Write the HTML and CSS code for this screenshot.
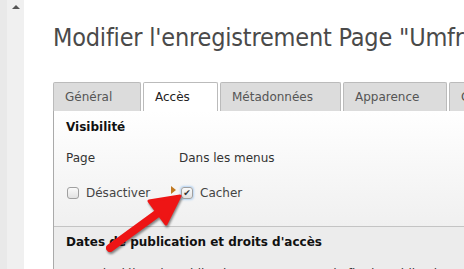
FILE: index.html
```html
<!DOCTYPE html>
<html>
<head>
    <title>Modifier l'enregistrement</title>
    <link rel="stylesheet" href="styles.css">
</head>
<body>
    <div class="scroll-rail">
        <div class="scroll-up"></div>
    </div>

    <div class="content">
        <h1 class="page-title">Modifier l'enregistrement Page "Umfrage"</h1>

        <div class="tabs">
            <div class="tab">Général</div>
            <div class="tab active">Accès</div>
            <div class="tab">Métadonnées</div>
            <div class="tab">Apparence</div>
            <div class="tab">Comportement</div>
        </div>

        <div class="panel">
            <div class="section visibility">
                <h3>Visibilité</h3>
                <div class="field-row labels">
                    <span class="col-a">Page</span>
                    <span class="col-b">Dans les menus</span>
                </div>
                <div class="field-row checks">
                    <span class="col-a check"><span class="box"></span>Désactiver</span>
                    <span class="col-b check">
                        <span class="marker"></span>
                        <span class="box checked focused">&#10004;</span>Cacher
                    </span>
                </div>
            </div>

            <div class="section dates">
                <h3>Dates de publication et droits d'accès</h3>
                <div class="field-row">
                    <span class="col-wide">Date de début de publication</span>
                    <span>Date de fin de publication</span>
                </div>
            </div>

            <!-- annotation arrow -->
            <svg class="callout" width="84" height="64" viewBox="0 0 84 64">
                <path d="M6 58 L54 23" stroke="#ee1515" stroke-width="8" stroke-linecap="round" fill="none"/>
                <path d="M76 6 L45 11 L62 34 Z" fill="#ee1515" stroke="#ee1515" stroke-width="3" stroke-linejoin="round"/>
            </svg>
        </div>
    </div>
</body>
</html>
```

FILE: styles.css
```css
body {
    margin: 0;
    display: flex;
    background: #fff;
    font-family: "DejaVu Sans", Verdana, sans-serif;
    font-size: 12px;
    color: #333;
    height: 269px;
    overflow: hidden;
}
.scroll-rail {
    width: 17px;
    border-left: 7px solid #e9e9e9;
    background: #f0f0f0;
    flex-shrink: 0;
    display: flex;
    justify-content: center;
}
.scroll-up {
    margin-top: 5px;
    width: 0;
    height: 0;
    border-left: 4px solid transparent;
    border-right: 4px solid transparent;
    border-bottom: 4px solid #555;
}
.content {
    flex: 1;
    padding-left: 29px;
    white-space: nowrap;
    overflow: hidden;
}
.page-title {
    margin: 23px 0 0;
    font-family: "DejaVu Sans", sans-serif;
    font-stretch: condensed;
    font-weight: normal;
    font-size: 25px;
    line-height: 30px;
    letter-spacing: -0.2px;
    color: #4a4a4a;
}
.tabs {
    display: flex;
    gap: 2px;
    margin-top: 29px;
    height: 29px;
}
.tab {
    flex-shrink: 0;
    border: 1px solid #bbb;
    border-bottom: none;
    border-radius: 2px 2px 0 0;
    background: #dcdcdc;
    color: #555;
    padding: 0 11px;
    line-height: 28px;
    font-size: 12px;
}
.tab:nth-child(1) { width: 64px; }
.tab:nth-child(2) { width: 51px; background: #fff; color: #222; }
.tab:nth-child(3) { width: 97px; }
.tab:nth-child(4) { width: 80px; }
.panel {
    position: relative;
    border-left: 1px solid #aaa;
    height: 200px;
}
.section h3 {
    margin: 0;
    font-size: 12px;
    font-weight: bold;
    color: #111;
}
.visibility {
    padding: 9px 12px 0;
    height: 106px;
    background: linear-gradient(#fff, #f0f0f0);
    border-bottom: 1px solid #c4c4c4;
}
.field-row {
    display: flex;
    align-items: center;
}
.labels {
    margin-top: 17px;
}
.checks {
    margin-top: 21px;
    color: #444;
}
.col-a {
    width: 113px;
}
.check {
    display: flex;
    align-items: center;
}
.box {
    box-sizing: border-box;
    width: 12px;
    height: 12px;
    margin: 0 7px 0 1px;
    border: 1px solid #a0a0a0;
    border-radius: 3px;
    background: linear-gradient(#fafafa, #e2e2e2);
    font-size: 9px;
    line-height: 10px;
    text-align: center;
    color: #333;
}
.box.focused {
    box-shadow: 0 0 2px 1px #b5d3f3;
}
.col-b .marker {
    width: 0;
    height: 0;
    border-top: 4px solid transparent;
    border-bottom: 4px solid transparent;
    border-left: 5px solid #c07820;
    margin: -6px 4px 0 -8px;
}
.dates {
    padding: 8px 12px 0;
    background: #ececec;
    height: 60px;
}
.dates .field-row {
    margin-top: 18px;
}
.col-wide {
    width: 256px;
}
.callout {
    position: absolute;
    left: 50px;
    top: 79px;
    filter: drop-shadow(1px 2px 1px rgba(0, 0, 0, 0.45));
}
```
